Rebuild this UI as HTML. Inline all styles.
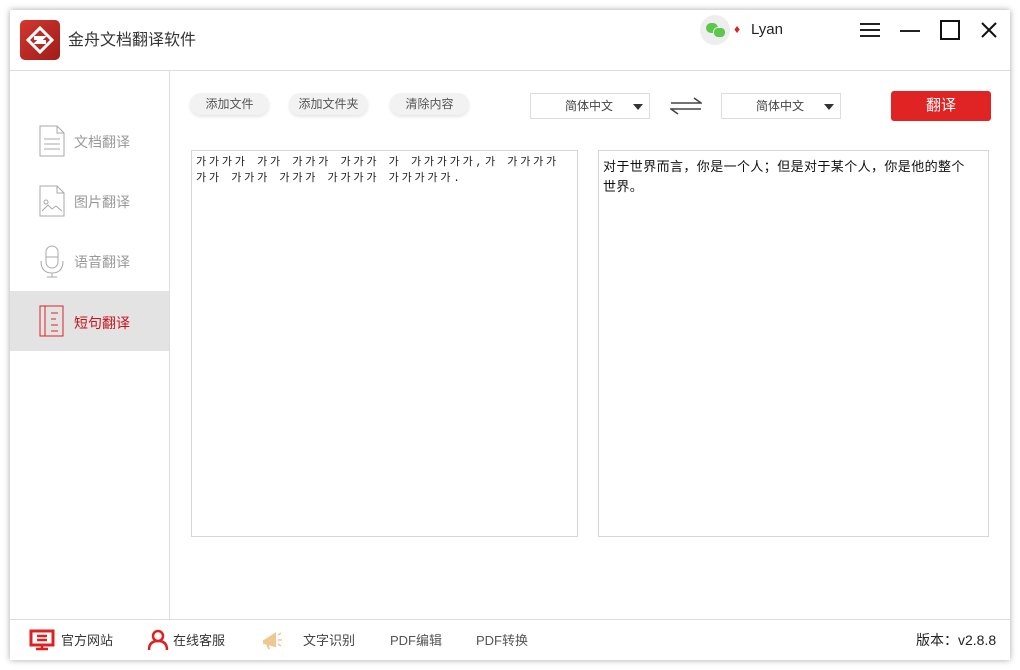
<!DOCTYPE html>
<html><head><meta charset="utf-8"><style>
body{margin:0;width:1020px;height:670px;background:#fff;font-family:"Liberation Sans","Noto Sans CJK SC",sans-serif;position:relative;overflow:hidden}
.win{position:absolute;left:10px;top:10px;width:1000px;height:650px;background:#fff;box-shadow:0 0 6px rgba(0,0,0,.35)}
.a{position:absolute}
.hdr{left:0;top:0;width:1000px;height:60px;border-bottom:1px solid #ddd}
.side{left:0;top:61px;width:159px;height:548px;border-right:1px solid #ddd}
.item{position:absolute;left:0;width:159px;height:60px;font-size:14px;color:#999}
.item span{position:absolute;left:64px;top:19px}
.btn{position:absolute;top:83px;height:22px;line-height:22px;border-radius:11px;background:#f2f2f2;box-shadow:0 2px 3px rgba(0,0,0,.1);font-size:12px;color:#555;text-align:center}
.sel{position:absolute;top:83px;width:118px;height:24px;border:1px solid #ddd;font-size:12px;color:#444;line-height:24px}
.sel span{position:absolute;left:34px}
.sel i{position:absolute;right:6px;top:10px;border-left:5px solid transparent;border-right:5px solid transparent;border-top:6px solid #333}
.box{position:absolute;top:140px;height:385px;border:1px solid #d6d6d6}
.ftr{left:0;top:609px;width:1000px;height:41px;border-top:1px solid #ddd;font-size:13px;color:#333}
.ftr .t{position:absolute;top:10px}
</style></head><body>
<div class="win">
<div class="a hdr">
 <div class="a" style="left:10px;top:10px;width:40px;height:40px;border-radius:5px;background:linear-gradient(135deg,#d2372f,#9e1d1a)">
  <svg width="40" height="40" viewBox="0 0 40 40"><g fill="none" stroke="#fff" stroke-width="4"><path d="M20 8 L32 20 L20 32 L8 20 Z" stroke-width="3"/><path d="M14 18 L22 18 L18 22 L26 22"/></g></svg>
 </div>
 <div class="a" style="left:58px;top:16px;font-size:16px;color:#333">金舟文档翻译软件</div>
 <div class="a" style="left:690px;top:5px;width:30px;height:30px;border-radius:15px;background:#eee"></div>
 <div class="a" style="left:696px;top:13px;width:12px;height:10px;border-radius:6px;background:#5cc84a"></div>
 <div class="a" style="left:703px;top:17px;width:11px;height:9px;border-radius:5px;background:#5cc84a;border:1px solid #eee"></div>
 <div class="a" style="left:724px;top:12px;color:#d22;font-size:12px">♦</div>
 <div class="a" style="left:741px;top:11px;font-size:15px;color:#222">Lyan</div>
 <div class="a" style="left:850px;top:13px;width:20px;height:14px;border-top:2px solid #222;border-bottom:2px solid #222;box-sizing:border-box"></div>
 <div class="a" style="left:850px;top:19px;width:20px;height:2px;background:#222"></div>
 <div class="a" style="left:890px;top:20px;width:20px;height:2px;background:#222"></div>
 <div class="a" style="left:930px;top:10px;width:20px;height:20px;border:2px solid #111;box-sizing:border-box"></div>
 <svg class="a" style="left:970px;top:11px" width="18" height="18"><path d="M2 2L16 16M16 2L2 16" stroke="#111" stroke-width="2"/></svg>
</div>
<div class="a side">
 <div class="item" style="top:42px"><svg class="a" style="left:29px;top:12px" width="26" height="32"><path d="M1 1H18L25 8V31H1Z M18 1V8H25 M5 14H21M5 19H21M5 24H21" fill="none" stroke="#aaa"/></svg><span>文档翻译</span></div>
 <div class="item" style="top:102px"><svg class="a" style="left:29px;top:12px" width="26" height="32"><path d="M1 1H18L25 8V31H1Z M18 1V8H25 M3 26L9 20L13 24L17 21L23 26" fill="none" stroke="#aaa"/><circle cx="7" cy="17" r="2" fill="none" stroke="#aaa"/></svg><span>图片翻译</span></div>
 <div class="item" style="top:162px"><svg class="a" style="left:29px;top:12px" width="26" height="34"><rect x="7" y="1" width="12" height="22" rx="6" fill="none" stroke="#aaa"/><path d="M7 12H19M2 16Q2 28 13 28Q24 28 24 16M13 28V32M8 32H18" fill="none" stroke="#aaa"/></svg><span>语音翻译</span></div>
 <div class="item" style="top:220px;background:#e3e3e3;height:60px;color:#c9141c"><svg class="a" style="left:29px;top:14px" width="26" height="32"><path d="M1 1H24V31H1Z M6 1V31 M12 8H19M12 14H17M12 20H19M12 26H19" fill="none" stroke="#d8232a"/></svg><span style="top:22px">短句翻译</span></div>
</div>
<div class="btn" style="left:180px;width:79px">添加文件</div>
<div class="btn" style="left:279px;width:79px">添加文件夹</div>
<div class="btn" style="left:380px;width:79px">清除内容</div>
<div class="sel" style="left:520px"><span>简体中文</span><i></i></div>
<svg class="a" style="left:660px;top:86px" width="32" height="20"><path d="M1 7H31L24 2 M31 13H1L8 18" fill="none" stroke="#444" stroke-width="1.5"/></svg>
<div class="sel" style="left:711px"><span>简体中文</span><i></i></div>
<div class="a" style="left:881px;top:81px;width:100px;height:30px;border-radius:3px;background:#e02424;color:#fff;font-size:15px;text-align:center;line-height:30px">翻译</div>
<div class="box" style="left:181px;font-family:'Liberation Mono','Noto Sans CJK KR',monospace;font-size:11px;letter-spacing:2.8px;line-height:16px;color:#222;padding:4px 4px;box-sizing:border-box;height:387px;width:387px;white-space:nowrap">가가가가 가가 가가가 가가가 가 가가가가가,가 가가가가<br>가가 가가가 가가가 가가가가 가가가가가.</div>
<div class="box" style="left:588px;width:391px;height:387px;box-sizing:border-box;padding:6px 4px;font-size:13px;letter-spacing:0.4px;line-height:20px;color:#111">对于世界而言，你是一个人；但是对于某个人，你是他的整个<br>世界。</div>
<div class="a ftr">
 <svg class="a" style="left:19px;top:9px" width="26" height="22"><rect x="2" y="2" width="22" height="14" fill="none" stroke="#e02020" stroke-width="3"/><path d="M8 7H18M8 11H18M13 16V20M7 20H19" stroke="#e02020" stroke-width="2.5"/></svg>
 <div class="t" style="left:51px">官方网站</div>
 <svg class="a" style="left:137px;top:9px" width="22" height="22"><circle cx="11" cy="7" r="5" fill="none" stroke="#e02020" stroke-width="2.5"/><path d="M2 21Q2 12 11 12Q20 12 20 21" fill="none" stroke="#e02020" stroke-width="2.5"/></svg>
 <div class="t" style="left:163px">在线客服</div>
 <svg class="a" style="left:251px;top:9px" width="22" height="22"><path d="M3 12L14 5V17L3 14Z M6 14L8 20" fill="#f0c790" stroke="#f0c790" stroke-width="2"/><path d="M17 6L20 4M17 11H21M17 15L20 17" stroke="#f0c790" stroke-width="1.5"/></svg>
 <div class="t" style="left:293px;color:#444">文字识别</div>
 <div class="t" style="left:380px;color:#555">PDF编辑</div>
 <div class="t" style="left:466px;color:#555">PDF转换</div>
 <div class="t" style="left:906px;color:#222;font-size:14px;top:10px">版本：v2.8.8</div>
</div>
</div>
</body></html>
